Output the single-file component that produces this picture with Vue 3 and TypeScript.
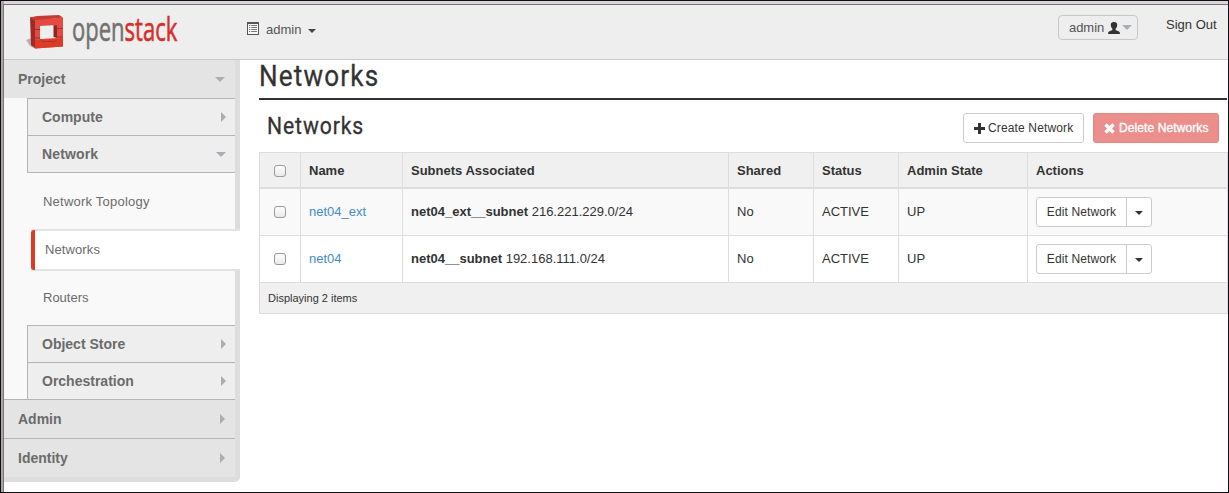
<script setup lang="ts">
interface NetworkRow {
  name: string
  subnet: string
  cidr: string
  shared: string
  status: string
  state: string
}

const columns: string[] = ['Name', 'Subnets Associated', 'Shared', 'Status', 'Admin State', 'Actions']

const rows: NetworkRow[] = [
  { name: 'net04_ext', subnet: 'net04_ext__subnet', cidr: '216.221.229.0/24', shared: 'No', status: 'ACTIVE', state: 'UP' },
  { name: 'net04', subnet: 'net04__subnet', cidr: '192.168.111.0/24', shared: 'No', status: 'ACTIVE', state: 'UP' },
]
</script>

<template>
  <div class="frame">
    <div class="screen">
      <header class="topbar">
        <svg class="logo" width="160" height="46" viewBox="0 0 160 46">
          <path d="M0 30 L5 28 L7 38 L4 36 Z" fill="#b5b3b3" />
          <path d="M4 7 L9 10 L9 38.5 L5 35 Z" fill="#9f2b26" />
          <path d="M4 7.5 L11 6 L33 5 L37 7.5 L9 11 Z" fill="#c53a32" />
          <path fill-rule="evenodd" d="M9 10 L37 7.5 L37 36.5 L9 38.5 Z M14 16 L14 29 L31 28 L31 15 Z" fill="#e34b41" />
          <path d="M9 30 L37 28.5 L37 36.5 L9 38.5 Z" fill="#dc3b27" />
          <path d="M27.5 15.2 L31 15 L31 28 L27.5 27 Z" fill="#8f2622" />
          <path d="M9 19.5 H14 M9 28 H14 M31 18.5 H37 M31 27 H37" stroke="#a82c25" stroke-width="1" />
          <path d="M14.5 29.5 L16.5 31.5 H29 L31 29.5" fill="none" stroke="#b32f25" stroke-width="1" />
          <text class="brand" transform="translate(46 31) scale(.688 1)"><tspan class="grey">open</tspan><tspan class="red">stack</tspan></text>
        </svg>
        <div class="project">
          <svg width="12" height="13" viewBox="0 0 12 13">
            <rect x=".5" y=".5" width="11" height="12" fill="#f7f7f7" stroke="#555" />
            <path d="M0 1 H12" stroke="#555" stroke-width="2" />
            <path d="M2 3.500 H3.2 M4.2 3.500 H10 M2 5.500 H3.2 M4.2 5.500 H10 M2 7.500 H3.2 M4.2 7.500 H10 M2 9.500 H3.2 M4.2 9.500 H10" stroke="#777" />
          </svg>
          <span>admin</span>
          <i class="caret"></i>
        </div>
        <div class="user">
          <span>admin</span>
          <svg width="12" height="12" viewBox="0 0 12 12"><path fill="#333" d="M6 0 C8.6 0 9.4 1.4 9.2 3.2 C9 5.2 8.2 6.2 7.6 6.8 V8 L11 9.4 Q12 9.8 12 12 H0 Q0 9.8 1 9.4 L4.4 8 V6.8 C3.8 6.2 3 5.2 2.8 3.2 C2.6 1.4 3.4 0 6 0 Z" /></svg>
          <i class="tri down"></i>
        </div>
        <div class="signout">Sign Out</div>
      </header>
      <div class="body">
        <nav class="sidebar">
          <div class="dash first">Project<i class="tri down"></i></div>
          <div class="group">
            <div class="panel">Compute<i class="tri right"></i></div>
            <div class="panel open">Network<i class="tri down"></i></div>
          </div>
          <div class="links">
            <a class="link">Network Topology</a>
            <a class="link active">Networks</a>
            <a class="link">Routers</a>
          </div>
          <div class="group">
            <div class="panel">Object Store<i class="tri right"></i></div>
            <div class="panel">Orchestration<i class="tri right"></i></div>
          </div>
          <div class="dash">Admin<i class="tri right"></i></div>
          <div class="dash">Identity<i class="tri right"></i></div>
        </nav>
        <main class="main">
          <div class="page-title">
            <svg width="130" height="38"><text class="heading h1" transform="translate(0 26) scale(.9 1)">Networks</text></svg>
          </div>
          <div class="table-head">
            <svg width="110" height="40"><text class="heading h2" transform="translate(0 28) scale(.9 1)">Networks</text></svg>
            <div class="actions">
              <button class="btn create">
                <svg width="11" height="11" viewBox="0 0 11 11"><path d="M5.5 0 V11 M0 5.5 H11" stroke="#333" stroke-width="3" /></svg>
                <span>Create Network</span>
              </button>
              <button class="btn delete">
                <svg width="11" height="11" viewBox="0 0 11 11"><path d="M1.5 1.5 L9.5 9.5 M9.5 1.5 L1.5 9.5" stroke="#fff" stroke-width="3.4" /></svg>
                <span>Delete Networks</span>
              </button>
            </div>
          </div>
          <table class="grid">
            <colgroup><col class="c0" /><col class="c1" /><col class="c2" /><col class="c3" /><col class="c3" /><col class="c5" /><col /></colgroup>
            <thead>
              <tr>
                <th class="pick"><i class="box"></i></th>
                <th v-for="c in columns" :key="c">{{ c }}</th>
              </tr>
            </thead>
            <tbody>
              <tr v-for="r in rows" :key="r.name">
                <td class="pick"><i class="box"></i></td>
                <td><a class="net">{{ r.name }}</a></td>
                <td><b>{{ r.subnet }}</b> {{ r.cidr }}</td>
                <td>{{ r.shared }}</td>
                <td>{{ r.status }}</td>
                <td>{{ r.state }}</td>
                <td class="act">
                  <div class="split">
                    <button class="edit">Edit Network</button>
                    <button class="more"><i class="caret"></i></button>
                  </div>
                </td>
              </tr>
            </tbody>
            <tfoot>
              <tr><td colspan="7">Displaying 2 items</td></tr>
            </tfoot>
          </table>
        </main>
      </div>
    </div>
  </div>
</template>

<style>
body { margin: 0; overflow: hidden; }
</style>

<style scoped>
* { box-sizing: border-box; }
.frame {
  width: 1229px; height: 493px; padding: 3px 0 0 2px;
  border: 1px solid #120d12; background: linear-gradient(90deg, #aaa4a4 0 3px, #d9d5d9 3px);
  font-family: "Liberation Sans", Arial, sans-serif; font-size: 13px; color: #333;
}
.screen { height: 488px; background: #fff; border: solid #777; border-width: 1px 0 0 1px; }
svg { display: block; flex: none; }
.topbar { height: 55px; display: flex; align-items: flex-start; background: #eee; border-bottom: 1px solid #c9c9c9; }
.logo { margin: 5px 0 0 22px; }
.brand { font-family: "Open Sans", "Noto Sans", sans-serif; font-size: 32px; stroke-width: .6px; }
.grey { fill: #727272; stroke: #727272; }
.red { fill: #d4302b; stroke: #d4302b; }
.project { display: flex; align-items: center; height: 20px; margin: 14px 0 0 61px; color: #555; }
.project span { margin: 0 7px 0 7px; }
.project svg { margin-top: -1px; }
.caret { display: block; border: 4px solid transparent; border-top-color: #444; border-bottom: 0; }
.project .caret { margin-top: 3px; }
.user {
  margin: 10px 0 0 auto; width: 80px; height: 25px; padding-left: 10px; display: flex; align-items: center;
  border: 1px solid #c8c8c8; border-radius: 4px; color: #555;
}
.user span { letter-spacing: -.05px; }
.user svg { margin: 1px 2px 0 4px; }
.user .tri { margin: 0; }
.signout { width: 62px; margin: 12px 0 0 28px; line-height: 16px; white-space: nowrap; }
.body { display: flex; align-items: flex-start; }
.sidebar { width: 236px; height: 422px; background: linear-gradient(90deg, #f9f9f9 231px, #ddd 231px); border-bottom: 5px solid #ddd; border-bottom-right-radius: 5px; color: #6b6b6b; }
.tri { display: block; flex: none; }
.tri.down { border: 5px solid transparent; border-top-color: #aaaeb1; border-bottom: 0; }
.tri.right { border: 5px solid transparent; border-left-color: #aaaeb1; border-right: 0; }
.dash, .panel { display: flex; align-items: center; justify-content: space-between; font-weight: bold; font-size: 14px; }
.dash { width: 231px; height: 39px; padding: 0 10px 0 14px; background: #e4e4e4; border-top: 1px solid #b5b5b5; }
.dash.first { height: 38px; border-top: 0; }
.group { width: 208px; margin-left: 23px; }
.panel { height: 37px; padding: 0 9px 0 14px; background: #eee; border: solid #b5b5b5; border-width: 1px 0 0 1px; }
.panel.open { height: 38px; border-bottom-width: 1px; letter-spacing: .15px; }
.links { height: 152px; padding-top: 8px; }
.link { display: flex; align-items: center; height: 42px; padding: 0 0 2px 39px; font-size: 13px; }
.link:first-child { letter-spacing: .22px; }
.link.active { height: 42px; margin: 6px 0 6px 27px; padding-left: 14px; background: #fff; border: solid #e3e3e3; border-width: 2px 0; position: relative; letter-spacing: .1px; }
.link.active::before { content: ""; position: absolute; left: 0; top: -1px; width: 4px; height: 40px; background: #dd3a22; border-radius: 3px 0 0 3px; }
.main { width: 969px; margin-left: 19px; }
.heading { font-family: Roboto, sans-serif; fill: #333; stroke: #333; stroke-width: .3px; }
.h1 { font-size: 29px; letter-spacing: 1.3px; }
.h2 { font-size: 23.5px; letter-spacing: 1px; }
.page-title { width: 968px; height: 40px; border-bottom: 2px solid #333; }
.table-head { height: 52px; padding: 6px 9px 0 8px; display: flex; justify-content: space-between; }
.actions { display: flex; gap: 9px; margin-top: 7px; }
button { font: 12px "Liberation Sans", Arial, sans-serif; color: #333; white-space: nowrap; }
.btn { height: 30px; padding: 0 0 0 10px; display: flex; align-items: center; gap: 4px; border-radius: 3px; border: 1px solid #ccc; background: #fff; }
.create { width: 121px; gap: 3px; letter-spacing: .14px; }
.delete { width: 126px; background: #ea8f8b; border-color: #e58480; color: #fff; letter-spacing: .1px; -webkit-text-stroke: .35px #fff; }
.grid { width: 969px; table-layout: fixed; border-spacing: 0; border: solid #ddd; border-width: 1px 1px 0 0; }
.c0 { width: 41px; }
.c1 { width: 102px; }
.c2 { width: 326px; }
.c3 { width: 85px; }
.c5 { width: 129px; }
th, td { padding: 0 0 0 8px; text-align: left; vertical-align: middle; border: solid #ddd; border-width: 0 0 1px 1px; white-space: nowrap; }
th { height: 36px; background: #f0f0f0; border-bottom-width: 2px; }
tbody td { height: 47px; padding-bottom: 2px; letter-spacing: 0; }
tbody td.act { padding-bottom: 0; }
tbody tr:first-child td { background: #f9f9f9; }
tfoot td { height: 31px; background: #f0f0f0; font-size: 11px; }
th.pick, td.pick { padding-left: 14px; }
.box { display: block; width: 12px; height: 12px; margin-top: 1px; border: 1px solid #999; border-radius: 3px; background: linear-gradient(#fff, #e9e9e9); }
.net { color: #428bca; }
.split { display: flex; width: 116px; height: 30px; border: 1px solid #ccc; border-radius: 3px; background: #fff; }
.edit, .more { height: 28px; padding: 0; border: 0; background: none; }
.edit { width: 90px; border-right: 1px solid #ccc; letter-spacing: .12px; }
.more { width: 24px; display: flex; align-items: center; justify-content: center; padding-top: 2px; }
.more .caret { border-top-color: #333; }
</style>
